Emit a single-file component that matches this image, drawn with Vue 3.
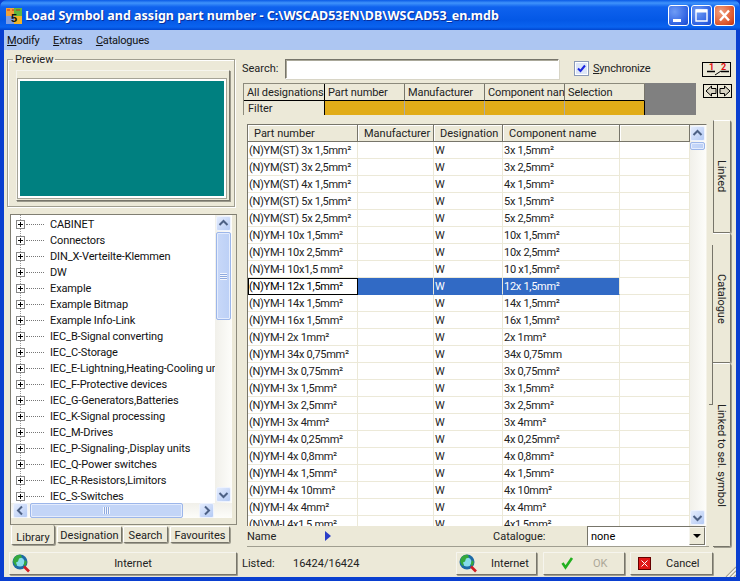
<template>
  <div class="window">
    <header class="titlebar">
      <svg class="app-icon" width="16" height="16" viewBox="0 0 16 16">
        <rect width="8" height="8" fill="#f2a23a" />
        <rect x="8" width="8" height="8" fill="#62b63e" />
        <rect y="8" width="8" height="8" fill="#7c9ce4" />
        <rect x="8" y="8" width="8" height="8" fill="#f4b426" />
        <path d="M1 2h3M6 2h2M10 2h4" stroke="#c8301c" />
        <text x="5" y="14" font-size="11" font-weight="700" font-family="Liberation Sans" fill="#111">5</text>
      </svg>
      <span class="title-text">Load Symbol and assign part number - C:\WSCAD53EN\DB\WSCAD53_en.mdb</span>
      <div class="caption-btns">
        <button class="cap cap-blue"><svg width="21" height="21" viewBox="0 0 21 21"><rect x="5" y="14" width="8" height="3" fill="#fff" /></svg></button>
        <button class="cap cap-blue"><svg width="21" height="21" viewBox="0 0 21 21"><path d="M5 5h11v11H5z" fill="none" stroke="#fff" stroke-width="1.400" /><rect x="5" y="4.500" width="11" height="3" fill="#fff" /></svg></button>
        <button class="cap cap-red"><svg width="21" height="21" viewBox="0 0 21 21"><path d="M6 5.500l9 10M15 5.500l-9 10" stroke="#fff" stroke-width="2.400" /></svg></button>
      </div>
    </header>
    <nav class="menubar">
      <span><u>M</u>odify</span>
      <span><u>E</u>xtras</span>
      <span><u>C</u>atalogues</span>
    </nav>

    <main class="body">
      <section class="left">
        <fieldset class="preview">
          <legend>Preview</legend>
          <div class="preview-frame"><div class="preview-canvas"></div></div>
        </fieldset>

        <div class="tree-box">
          <div class="tree-main">
            <ul class="tree">
              <li v-for="item in treeItems" :key="item">
                <span class="plus"></span><span class="dots"></span><span class="tree-label">{{ item }}</span>
              </li>
            </ul>
            <div class="vscroll tree-v">
              <button class="sb-btn"><svg width="15" height="15" viewBox="0 0 15 15"><path d="M3.500 9l4-4 4 4" fill="none" stroke="#4d6185" stroke-width="2" /></svg></button>
              <div class="thumb-v tree-thumb"><i></i></div>
              <div class="sb-fill"></div>
              <button class="sb-btn"><svg width="15" height="15" viewBox="0 0 15 15"><path d="M3.500 6l4 4 4-4" fill="none" stroke="#4d6185" stroke-width="2" /></svg></button>
            </div>
          </div>
          <div class="hscroll">
            <button class="sb-btn"><svg width="15" height="15" viewBox="0 0 15 15"><path d="M9 3.500l-4 4 4 4" fill="none" stroke="#4d6185" stroke-width="2" /></svg></button>
            <div class="thumb-h"><i></i></div>
            <button class="sb-btn"><svg width="15" height="15" viewBox="0 0 15 15"><path d="M6 3.500l4 4-4 4" fill="none" stroke="#4d6185" stroke-width="2" /></svg></button>
          </div>
        </div>

        <div class="lib-tabs">
          <span class="lib-tab active">Library</span>
          <span class="lib-tab tab-des">Designation</span>
          <span class="lib-tab tab-search">Search</span>
          <span class="lib-tab tab-fav">Favourites</span>
        </div>

        <button class="btn internet-wide">
          <svg class="globe" width="19" height="19" viewBox="0 0 19 19">
            <circle cx="8" cy="8" r="7.500" fill="#1d6aa6" />
            <circle cx="8" cy="8" r="4.500" fill="#86dcea" />
            <path d="M2 4c2-3 5-3.500 7-3l1 2.500-3 1-1 3-2 1 1 3-2 0-2-4zM13 6l2 2-1.500 4-2-1z" fill="#35a83c" />
            <path d="M12 12.500l5 5" stroke="#d01c24" stroke-width="2.600" />
          </svg>
          Internet
        </button>
      </section>

      <section class="right">
        <div class="search-row">
          <div class="right-main">
            <label class="search-label">Search:</label>
            <input class="search-input" type="text" />
            <span class="check"><svg width="11" height="11" viewBox="0 0 11 11"><path d="M2 5.500l2.500 2.500L9 2.500" fill="none" stroke="#1c26e0" stroke-width="2" /></svg></span>
            <span class="sync"><u>S</u>ynchronize</span>
          </div>
          <button class="tool-btn tool-12">
            <span class="red one">1</span><span class="red two">2</span>
            <svg width="27" height="13" viewBox="0 0 27 13"><path d="M4 8.500h8M18 8.500h8" stroke="#000" stroke-width="1.400" /><path d="M12 12l6-4" stroke="#000" stroke-width="1" /></svg>
          </button>
        </div>

        <div class="filter-row">
          <div class="filter-grid">
            <div class="fg-head first">All designations</div>
            <div class="fg-head">Part number</div>
            <div class="fg-head">Manufacturer</div>
            <div class="fg-head">Component nan</div>
            <div class="fg-head">Selection</div>
            <div class="fg-filter">Filter</div>
            <div class="fg-cell"></div>
            <div class="fg-cell"></div>
            <div class="fg-cell"></div>
            <div class="fg-cell last"></div>
          </div>
          <div class="filter-blank"></div>
          <div class="arrow-btns">
            <button class="arrow-btn"><svg width="14" height="14" viewBox="0 0 14 14"><path d="M7.500 2L2 7l5.500 5V9.500H12v-5H7.500z" fill="#d8d4c4" stroke="#000" /></svg></button>
            <button class="arrow-btn"><svg width="14" height="14" viewBox="0 0 14 14"><path d="M6.500 2L12 7l-5.500 5V9.500H2v-5h4.500z" fill="#d8d4c4" stroke="#000" /></svg></button>
          </div>
        </div>

        <div class="mid">
          <div class="table-col">
            <div class="table-box">
              <div class="table-clip">
                <table class="grid">
                  <thead>
                    <tr>
                      <th class="c1">Part number</th>
                      <th class="c2">Manufacturer</th>
                      <th class="c3">Designation</th>
                      <th class="c4">Component name</th>
                      <th class="c5"></th>
                    </tr>
                  </thead>
                  <tbody>
                    <tr v-for="(row, i) in rows" :key="i" :class="{ selected: i === 8 }">
                      <td class="col-part">{{ row[0] }}</td>
                      <td></td>
                      <td>W</td>
                      <td class="col-comp">{{ row[1] }}</td>
                      <td class="col-end"></td>
                    </tr>
                  </tbody>
                </table>
              </div>
              <div class="vscroll table-v">
                <button class="sb-btn"><svg width="15" height="15" viewBox="0 0 15 15"><path d="M3.500 9l4-4 4 4" fill="none" stroke="#4d6185" stroke-width="2" /></svg></button>
                <div class="thumb-v table-thumb"></div>
                <div class="sb-fill"></div>
                <button class="sb-btn"><svg width="15" height="15" viewBox="0 0 15 15"><path d="M3.500 6l4 4 4-4" fill="none" stroke="#4d6185" stroke-width="2" /></svg></button>
              </div>
            </div>
            <div class="name-row">
              <span class="name-label">Name</span>
              <span class="name-arrow"></span>
              <span class="cat-label">Catalogue:</span>
              <div class="combo">
                <span>none</span>
                <button class="combo-btn"><i></i></button>
              </div>
            </div>
          </div>
          <div class="gutter"><div class="page-edge"></div></div>
          <div class="side-tabs">
            <div class="side-tab tab-linked"><span>Linked</span></div>
            <div class="side-tab tab-cat"><span>Catalogue</span></div>
            <div class="side-tab tab-sel"><span>Linked to sel. symbol</span></div>
          </div>
        </div>

        <div class="bottom-row">
          <span class="listed-label">Listed:</span>
          <span class="listed-val">16424/16424</span>
          <button class="btn b-internet">
            <svg class="globe" width="19" height="19" viewBox="0 0 19 19">
              <circle cx="8" cy="8" r="7.500" fill="#1d6aa6" />
              <circle cx="8" cy="8" r="4.500" fill="#86dcea" />
              <path d="M2 4c2-3 5-3.500 7-3l1 2.500-3 1-1 3-2 1 1 3-2 0-2-4zM13 6l2 2-1.500 4-2-1z" fill="#35a83c" />
              <path d="M12 12.500l5 5" stroke="#d01c24" stroke-width="2.600" />
            </svg>
            <span>Internet</span>
          </button>
          <button class="btn b-ok">
            <svg width="13" height="14" viewBox="0 0 13 14"><path d="M1.500 7l3 4.500L11 2" fill="none" stroke="#22b020" stroke-width="2.600" /></svg>
            <span>OK</span>
          </button>
          <button class="btn b-cancel">
            <svg width="13" height="13" viewBox="0 0 13 13"><rect x="0.500" y="0.500" width="12" height="12" fill="#e01818" stroke="#600" /><path d="M3.500 3.500l6 6M9.500 3.500l-6 6" stroke="#fff" stroke-width="1" /></svg>
            <span>Cancel</span>
          </button>
        </div>
        <svg class="grip" width="11" height="11" viewBox="0 0 11 11">
          <path d="M11 1L1 11M11 5l-6 6M11 9l-2 2" stroke="#a8a594" stroke-width="1.200" />
          <path d="M11 2.500L2.500 11M11 6.500L6.500 11" stroke="#fff" stroke-width="1" />
        </svg>
      </section>
    </main>
  </div>
</template>

<script setup>
const treeItems = [
  'CABINET', 'Connectors', 'DIN_X-Verteilte-Klemmen', 'DW', 'Example', 'Example Bitmap',
  'Example Info-Link', 'IEC_B-Signal converting', 'IEC_C-Storage',
  'IEC_E-Lightning,Heating-Cooling units', 'IEC_F-Protective devices', 'IEC_G-Generators,Batteries',
  'IEC_K-Signal processing', 'IEC_M-Drives', 'IEC_P-Signaling-,Display units',
  'IEC_Q-Power switches', 'IEC_R-Resistors,Limitors', 'IEC_S-Switches',
];

const rows = [
  ['(N)YM(ST) 3x 1,5mm²', '3x 1,5mm²'],
  ['(N)YM(ST) 3x 2,5mm²', '3x 2,5mm²'],
  ['(N)YM(ST) 4x 1,5mm²', '4x 1,5mm²'],
  ['(N)YM(ST) 5x 1,5mm²', '5x 1,5mm²'],
  ['(N)YM(ST) 5x 2,5mm²', '5x 2,5mm²'],
  ['(N)YM-I 10x 1,5mm²', '10x 1,5mm²'],
  ['(N)YM-I 10x 2,5mm²', '10x 2,5mm²'],
  ['(N)YM-I 10x1,5 mm²', '10 x1,5mm²'],
  ['(N)YM-I 12x 1,5mm²', '12x 1,5mm²'],
  ['(N)YM-I 14x 1,5mm²', '14x 1,5mm²'],
  ['(N)YM-I 16x 1,5mm²', '16x 1,5mm²'],
  ['(N)YM-I 2x 1mm²', '2x 1mm²'],
  ['(N)YM-I 34x 0,75mm²', '34x 0,75mm'],
  ['(N)YM-I 3x 0,75mm²', '3x 0,75mm²'],
  ['(N)YM-I 3x 1,5mm²', '3x 1,5mm²'],
  ['(N)YM-I 3x 2,5mm²', '3x 2,5mm²'],
  ['(N)YM-I 3x 4mm²', '3x 4mm²'],
  ['(N)YM-I 4x 0,25mm²', '4x 0,25mm²'],
  ['(N)YM-I 4x 0,8mm²', '4x 0,8mm²'],
  ['(N)YM-I 4x 1,5mm²', '4x 1,5mm²'],
  ['(N)YM-I 4x 10mm²', '4x 10mm²'],
  ['(N)YM-I 4x 4mm²', '4x 4mm²'],
  ['(N)YM-I 4x1,5 mm²', '4x1,5mm²'],
];
</script>

<style>
html, body { margin: 0; padding: 0; overflow: hidden; background: #0a3fd0; }
</style>

<style scoped>
.window {
  width: 740px;
  height: 581px;
  display: flex;
  flex-direction: column;
  font-family: Roboto, "Liberation Sans", sans-serif;
  font-size: 11px;
  color: #000;
  background: #0a3fd0;
  overflow: hidden;
}
button { font: inherit; color: inherit; padding: 0; }

.titlebar {
  height: 30px;
  flex: none;
  display: flex;
  align-items: center;
  padding: 0 5px 0 6px;
  box-sizing: border-box;
  background: linear-gradient(#0a5ae6 0, #3f93fb 3px, #0f62ee 7px, #0458e6 20px, #0a63ef 27px, #0046d0 30px);
  border-radius: 7px 7px 0 0;
}
.app-icon { flex: none; margin-top: 1px; }
.title-text {
  margin-left: 3px;
  color: #fff;
  font-family: "Noto Sans", sans-serif;
  font-weight: 700;
  font-size: 12.500px;
  white-space: nowrap;
  flex: 1;
  text-shadow: 1px 1px 0 #0a2f9a;
}
.caption-btns { display: flex; gap: 2px; margin-top: 1px; }
.cap { width: 21px; height: 21px; border: 1px solid #fff; border-radius: 3px; display: block; }
.cap svg { display: block; margin: -1px; }
.cap-blue { background: radial-gradient(circle at 30% 30%, #6f9cf5, #2a5de0 75%, #1a46c8); }
.cap-red { background: radial-gradient(circle at 30% 30%, #f0a080, #e05a30 65%, #c03010); }

.menubar {
  height: 20px;
  flex: none;
  margin: 0 4px;
  display: flex;
  align-items: center;
  gap: 13.500px;
  padding-left: 3px;
  background: #adc6f2;
  color: #111;
  letter-spacing: -0.200px;
}

.body {
  flex: 1;
  min-height: 0;
  margin: 0 4px 4px;
  display: flex;
  background: #ece9d8;
  position: relative;
}

/* left column */
.left {
  width: 234px;
  flex: none;
  padding: 3px 0 2px 3px;
  box-sizing: border-box;
  display: flex;
  flex-direction: column;
}
.preview {
  margin: 0;
  padding: 4px 4px 5px 8px;
  width: 228px;
  height: 154px;
  box-sizing: border-box;
  border: 1px solid #a09e90;
  box-shadow: inset 1px 1px 0 #fff, 1px 1px 0 #fff;
  min-width: 0;
}
.preview legend {
  padding: 0 2px;
  margin-left: -3px;
  color: #222;
}
.preview-frame {
  height: 131px;
  box-sizing: border-box;
  padding: 8px 3px 2px 1px;
  border: 1px solid #f6f5ee;
  border-right-color: #77756a;
  border-bottom-color: #77756a;
  background: #ece9d8;
  box-shadow: 1px 1px 0 #9a988b;
}
.preview-canvas {
  height: 100%;
  box-sizing: border-box;
  background: #008080;
  border: 2px solid #fff;
  outline: 1px solid #a5a396;
}
.tree-box {
  margin-top: 7px;
  margin-left: 3px;
  width: 227px;
  height: 311px;
  flex: none;
  box-sizing: border-box;
  border: 1px solid #807e72;
  border-right-color: #8c8a7c;
  border-bottom-color: #8c8a7c;
  padding: 0 4px 6px 0;
  display: flex;
  flex-direction: column;
}
.tree-main { flex: 1; min-height: 0; display: flex; }
.tree {
  flex: 1;
  min-width: 0;
  margin: 0;
  padding: 1px 0 0;
  list-style: none;
  overflow: hidden;
  background-color: #fff;
  background-image: linear-gradient(#999 50%, transparent 50%);
  background-size: 1px 2px;
  background-position: 9px 0;
  background-repeat: repeat-y;
}
.tree li {
  height: 16px;
  display: flex;
  align-items: center;
  white-space: nowrap;
  color: #111;
  letter-spacing: -0.120px;
}
.plus {
  width: 9px;
  height: 9px;
  box-sizing: border-box;
  margin-left: 5px;
  flex: none;
  border: 1px solid #888;
  background:
    linear-gradient(#000, #000) center / 5px 1px no-repeat,
    linear-gradient(#000, #000) center / 1px 5px no-repeat,
    #fff;
}
.dots {
  width: 18px;
  margin: 0 6px 0 1px;
  flex: none;
  border-top: 1px dotted #777;
}
.tree-label { display: block; }

.vscroll {
  display: flex;
  flex-direction: column;
  width: 17px;
  flex: none;
  padding: 1px;
  box-sizing: border-box;
  background: linear-gradient(90deg, #f1f0ea, #fdfdfa);
}
.sb-fill { flex: 1; }
.sb-btn {
  width: 15px;
  height: 15px;
  display: block;
  flex: none;
  box-sizing: border-box;
  border: 1px solid #eef3fe;
  border-radius: 2px;
  background: linear-gradient(135deg, #e4ecfd, #b4caf4);
}
.sb-btn svg { display: block; margin: -1px; }
.thumb-v {
  border: 1px solid #9cb6ea;
  border-radius: 2px;
  background: linear-gradient(90deg, #c8d8f8, #bcd0f6);
  box-sizing: border-box;
  box-shadow: inset 0 0 0 1px #e4ecfd;
  display: flex;
  align-items: center;
  justify-content: center;
}
.tree-thumb { height: 88px; margin-top: 1px; }
.tree-thumb i { width: 7px; height: 7px; background: repeating-linear-gradient(#f4f7fe 0 1px, #8ea9de 1px 2px); }
.table-thumb { height: 8px; margin-top: 1px; }

.hscroll {
  height: 15px;
  flex: none;
  display: flex;
  background: linear-gradient(#f1f0ea, #fdfdfa);
  padding: 0 18px 0 2px;
}
.thumb-h {
  flex: 1;
  margin: 0 16px 0 2px;
  border: 1px solid #9cb6ea;
  border-radius: 2px;
  box-sizing: border-box;
  background: #c3d5f7;
  box-shadow: inset 0 0 0 1px #e4ecfd;
  display: flex;
  align-items: center;
  justify-content: center;
}
.thumb-h i { width: 7px; height: 7px; background: repeating-linear-gradient(90deg, #f4f7fe 0 1px, #8ea9de 1px 2px); }

.lib-tabs {
  height: 21px;
  margin-left: 4px;
  display: flex;
  align-items: flex-start;
  flex: none;
}
.lib-tab {
  height: 17px;
  margin-top: 1px;
  line-height: 17px;
  text-align: center;
  margin-right: 1px;
  border: 1px solid #fff;
  border-right-color: #77756a;
  border-bottom-color: #77756a;
  border-radius: 2px;
  box-sizing: border-box;
  box-shadow: 1px 1px 0 #a09e90;
  color: #222;
}
.lib-tab.active {
  height: 20px;
  margin-top: 0;
  margin-right: 2px;
  line-height: 25px;
  width: 44px;
  border-top: none;
}
.tab-des { width: 65px; }
.tab-search { width: 45px; }
.tab-fav { width: 60px; margin-left: 1px; }
.btn {
  display: flex;
  align-items: center;
  box-sizing: border-box;
  border: 1px solid #f6f5ee;
  border-right-color: #77756a;
  border-bottom-color: #77756a;
  background: #ece9d8;
  box-shadow: 1px 1px 0 #a09e90;
  color: #222;
  border-radius: 1px;
}
.internet-wide {
  width: 228px;
  height: 23px;
  margin-top: 6px;
  margin-left: 2px;
  padding-left: 20px;
  position: relative;
  justify-content: center;
}
.internet-wide .globe { position: absolute; left: 2px; top: 1px; }

/* right column */
.right {
  flex: 1;
  min-width: 0;
  padding: 8px 4px 2px 4px;
  display: flex;
  flex-direction: column;
}
.search-row { display: flex; height: 21px; flex: none; justify-content: space-between; }
.right-main { display: flex; align-items: center; }
.search-label { width: 43px; color: #222; }
.search-input {
  width: 274px;
  height: 20px;
  box-sizing: border-box;
  border: 1px solid #77756a;
  border-right-color: #fff;
  border-bottom-color: #fff;
  background: #fff;
  margin: 0;
  outline: none;
  box-shadow: 1px 1px 0 #d8d5c6, inset 1px 1px 0 #aaa89a;
}
.check {
  margin-left: 15px;
  width: 15px;
  height: 15px;
  box-sizing: border-box;
  display: flex;
  align-items: center;
  justify-content: center;
  background: #dde6f8;
  border: 1px solid #8a9ab8;
  box-shadow: inset 0 0 0 1px #fff;
}
.sync { margin-left: 4px; color: #222; letter-spacing: -0.200px; }
.tool-btn {
  width: 29px;
  height: 15px;
  margin: 4px 1px 0 0;
  position: relative;
  box-sizing: border-box;
  border: 1px solid #000;
  background: #ece9d8;
  overflow: hidden;
}
.tool-btn svg { position: absolute; left: 0; top: 0; }
.red { position: absolute; top: -1px; color: #e01010; font-size: 9px; line-height: 10px; font-weight: 700; }
.red.one { left: 6px; }
.red.two { left: 18px; }

.filter-row { display: flex; margin-top: 4px; flex: none; height: 32px; }
.filter-grid {
  display: grid;
  grid-template-columns: 81px 80px 80px 80px 80px;
  grid-template-rows: 17px 14px;
  border-top: 1px solid #8c8a7c;
  border-left: 1px solid #8c8a7c;
  box-sizing: border-box;
  margin-left: 1px;
  height: 32px;
}
.fg-head {
  box-sizing: border-box;
  padding-left: 3px;
  line-height: 18px;
  border-right: 1px solid #77756a;
  border-bottom: 1px solid #000;
  overflow: hidden;
  white-space: nowrap;
  color: #222;
  letter-spacing: -0.100px;
}
.fg-head.first { border-right-color: #000; }
.fg-filter {
  padding-left: 4px;
  line-height: 16px;
  border-right: 1px solid #000;
  color: #222;
}
.fg-cell { background: #e1ac18; border-right: 1px solid #aaa; }
.fg-cell.last { border-right-color: #000; }
.filter-blank { width: 52px; background: #808080; }
.arrow-btns { margin-left: 7px; display: flex; margin-top: 1px; }
.arrow-btn {
  width: 15px;
  height: 14px;
  box-sizing: border-box;
  border: 1px solid #000;
  background: #ece9d8;
}
.arrow-btn + .arrow-btn { margin-left: -1px; }
.arrow-btn svg { display: block; margin: -1px 0 0 -0.500px; }

.mid { flex: 1; min-height: 0; display: flex; margin-top: 8px; }
.table-col { width: 467px; flex: none; display: flex; flex-direction: column; }
.table-box {
  flex: 1;
  min-height: 0;
  margin: 1px 2px 0 5px;
  box-sizing: border-box;
  border: 1px solid #77756a;
  border-right-color: #f4f2e8;
  border-bottom: none;
  display: flex;
  background: #fff;
}
.table-clip { flex: 1; min-width: 0; overflow: hidden; }
.grid {
  table-layout: fixed;
  width: 442px;
  border-collapse: separate;
  border-spacing: 0;
  color: #222;
}
.c1 { width: 110px; }
.c2 { width: 76px; }
.c3 { width: 69px; }
.c4 { width: 117px; }
.c5 { width: 70px; }
.grid th {
  height: 17px;
  padding: 0 0 0 6px;
  box-sizing: border-box;
  font-weight: 400;
  text-align: left;
  white-space: nowrap;
  background: #ece9d8;
  border-right: 1px solid #77756a;
  border-bottom: 1px solid #77756a;
  box-shadow: inset 1px 1px 0 #fff;
  overflow: hidden;
}
.grid td {
  height: 17px;
  padding: 0 0 0 1px;
  box-sizing: border-box;
  white-space: nowrap;
  border-right: 1px solid #ece9d8;
  border-bottom: 1px solid #ece9d8;
  overflow: hidden;
  letter-spacing: -0.280px;
}
.grid tr.selected td { background: #316ac5; color: #fff; border-bottom-color: #316ac5; }
.grid tr.selected td.col-end { background: #fff; border-bottom-color: #ece9d8; }
.grid tr.selected td.col-part { background: #fff; color: #000; border: 1px solid #000; padding-left: 0; }
.table-v { width: 16px; padding-left: 0; }

.name-row {
  height: 21px;
  flex: none;
  display: flex;
  align-items: center;
  margin-left: 5px;
  border-bottom: 1px solid #a09e90;
  box-sizing: border-box;
  color: #222;
}
.name-label { width: 78px; }
.name-arrow {
  width: 0;
  height: 0;
  border-top: 5px solid transparent;
  border-bottom: 5px solid transparent;
  border-left: 6px solid #2a3ec8;
}
.cat-label { margin-left: 162px; width: 94px; }
.combo {
  width: 119px;
  height: 20px;
  box-sizing: border-box;
  border: 1px solid #77756a;
  border-right-color: #fff;
  border-bottom-color: #fff;
  background: #fff;
  display: flex;
  align-items: center;
  justify-content: space-between;
  padding-left: 3px;
  color: #000;
}
.combo-btn {
  width: 16px;
  height: 18px;
  border: 1px solid #f6f5ee;
  border-right-color: #77756a;
  border-bottom-color: #77756a;
  background: #ece9d8;
  box-sizing: border-box;
  display: flex;
  align-items: center;
  justify-content: center;
}
.combo-btn i { width: 0; height: 0; border-left: 4px solid transparent; border-right: 4px solid transparent; border-top: 4px solid #000; }

.gutter { width: 4px; flex: none; }
.page-edge {
  margin-top: 122px;
  width: 4px;
  height: 160px;
  box-sizing: border-box;
  border-right: 1px solid #77756a;
  border-bottom: 1px solid #77756a;
}
.side-tabs {
  width: 18px;
  margin-top: -3px;
  flex: none;
  display: flex;
  flex-direction: column;
}
.side-tab {
  box-sizing: border-box;
  border-top: 1px solid #fff;
  border-right: 1px solid #77756a;
  border-bottom: 1px solid #77756a;
  border-radius: 0 2px 2px 0;
  box-shadow: 1px 1px 0 #a09e90;
  writing-mode: vertical-rl;
  color: #222;
}
.side-tab span { display: block; width: 17px; line-height: 17px; white-space: nowrap; }
.tab-linked { height: 113px; padding-top: 39px; border-left: 1px solid #77756a; }
.tab-cat { height: 130px; padding-top: 40px; }
.tab-sel { flex: 1; padding-top: 40px; }

.bottom-row {
  height: 24px;
  flex: none;
  margin-top: 4px;
  display: flex;
  align-items: center;
  color: #222;
}
.listed-label { width: 51px; }
.listed-val { width: 163px; }
.bottom-row .btn { height: 23px; }
.b-internet { width: 81px; padding-left: 2px; }
.b-internet span { margin-left: 13px; }
.b-ok { width: 82px; margin-left: 6px; padding-left: 17px; }
.b-ok span { margin-left: 19px; color: #aca899; }
.b-cancel { width: 83px; margin-left: 5px; padding-left: 7px; }
.b-cancel span { margin-left: 15px; }
.grip { position: absolute; right: 0; bottom: 0; }
</style>
